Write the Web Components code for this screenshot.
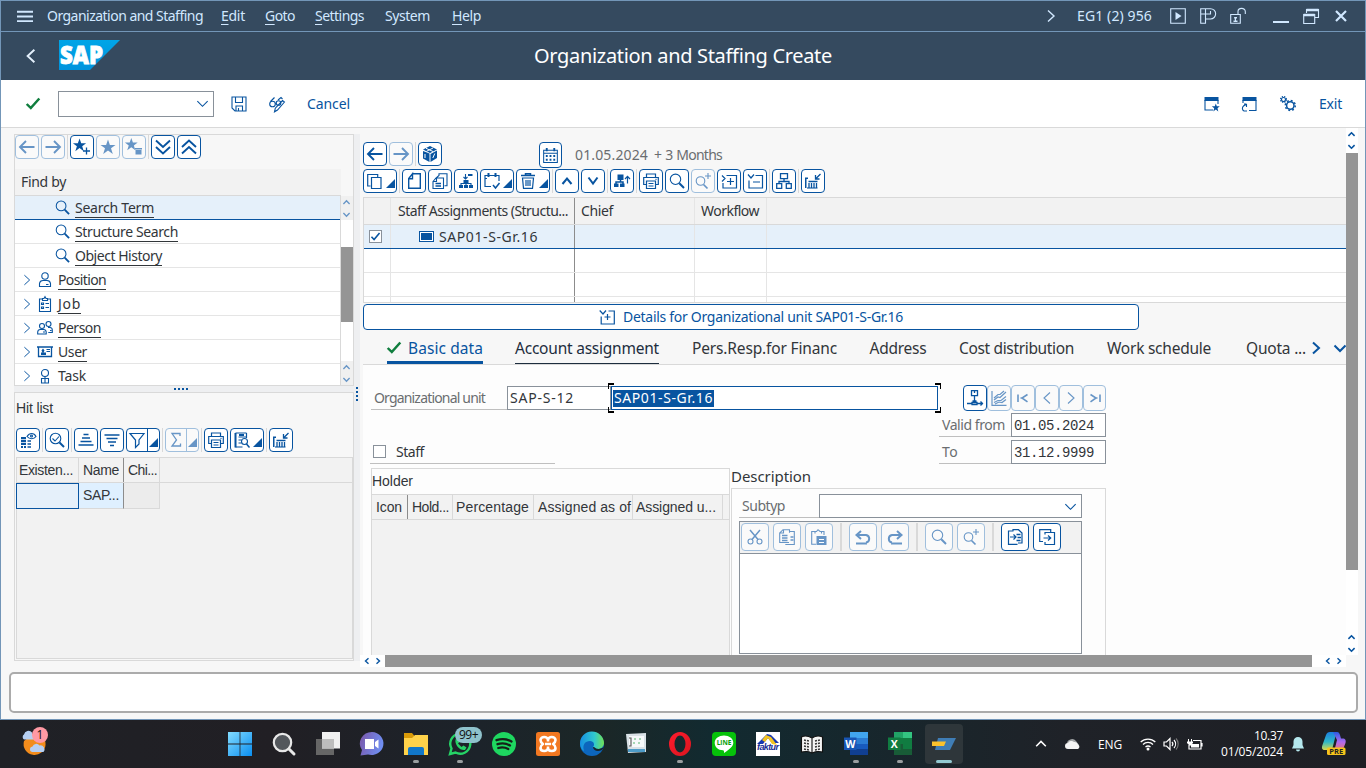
<!DOCTYPE html>
<html lang="en">
<head>
<meta charset="utf-8">
<title>Organization and Staffing Create</title>
<style>
html,body{margin:0;padding:0;width:1366px;height:768px;overflow:hidden}
body{font:14px/20px "Noto Sans","Open Sans",sans-serif;color:#32363a;background:#f7f7f7}
</style>
</head>
<body>
<sap-window></sap-window>
<task-bar></task-bar>
<script>
const STAR='M8 .5l1.9 5.4h5.6L11 9.3l1.8 5.7L8 11.5 3.200 15 5 9.300.5 5.900h5.600z';
const ARROW_IN='<path stroke-width="1.300" d="M15.500 1l-5 5M10.500 2v4h4"/>';
const TREE='<path class="f" d="M5.500 7h5v3h-5zM1 12h4v3H1zM6 12h4v3H6zM11 12h4v3h-4z"/><path d="M3 12v-1.500h10V12M8 9v3"/>';
const ICONS={
 menu:'<path stroke-width="2" d="M0 4h16M0 9h16M0 14h16"/>',
 right:'<path d="M5 2.500l6 5.500-6 5.500"/>',left:'<path d="M11 2.500L5 8l6 5.500"/>',
 down:'<path d="M2.500 5.500L8 11l5.500-5.500"/>',up:'<path d="M2.500 10.500L8 5l5.500 5.500"/>',
 dup:'<path stroke-width="2" d="M3.500 11L8 5.500l4.500 5.500"/>',ddn:'<path stroke-width="2" d="M3.500 4.500L8 10.500l4.500-6"/>',
 play:'<path d="M.7.7h14.600v14.600H.7z"/><path class="f" d="M5.500 4l6 4-6 4z"/>',
 pee:'<path d="M.7.700H10.500a4.800 4.800 0 0 1 0 10.300H5.500v4.300H.7zM5.500 11V6H.7M5.500.7V6h5V3"/>',
 lock:'<path d="M.7 6.500h9.600v8.800H.7zM8 6.500V3.500a3.500 3 0 0 1 7.300 0V6"/><path class="f" d="M4 9h3v1.500H6v2h1.500V14h-4v-1.500H5z"/>',
 min:'<path stroke-width="2" d="M0 14h16"/>',
 restore:'<path d="M3.500 5V1.500h12v8H12M.7 6.500h11v9H.7z"/><path stroke-width="2.500" d="M3.500 2h12M.7 7h11"/>',
 close:'<path stroke-width="2.200" d="M3 3l10 10M13 3L3 13"/>',
 check:'<path stroke-width="2.800" d="M.8 8.500l4.700 5L15.200 1.800"/>',
 save:'<path d="M1 1h14v14H4l-3-3zM4.500 1v5.500h7V1M5 15v-5h6.500v5M7.500 12v3"/>',
 glasses:'<circle cx="3.500" cy="8" r="2.800"/><circle cx="9.500" cy="7" r="2.300"/><path d="M1.500 5.500L5.500 1.500M9 4l3-2.500 1.500 1.500M6.200 7.500h1M15.500 6L8.500 14l-3 1.800.8-3.600L13.500 4.500z"/>',
 winstar:'<path class="f" d="M.5 1h14v4H.5z"/><path d="M1 4v10h8M14 4v4"/><path class="f" d="M11.800 7.500l1 2.800h3l-2.300 1.900.8 3.300-2.500-1.900-2.500 1.900.9-3.300L7.800 10.300h3z"/>',
 winlink:'<path class="f" d="M1.500 1h14v4h-14z"/><path d="M2 4v3M15 4v10.500H8M5.500 8H3M5.500 8v3M5.500 8L2.500 10a3 3 0 0 0 .5 5h3"/>',
 gears:'<circle cx="3.500" cy="3.500" r="2"/><circle cx="3.500" cy="3.500" r="3" stroke-dasharray="1.300 1.100"/><circle cx="10.300" cy="9.500" r="3.700" stroke-width="1.500"/><circle cx="10.300" cy="9.500" r="5" stroke-width="1.500" stroke-dasharray="1.900 2"/>',
 back:'<path stroke-width="1.900" d="M15.500 8H1M7 2L1 8l6 6"/>',fwd:'<path stroke-width="1.900" d="M.5 8H15M9 2l6 6-6 6"/>',
 star:'<path class="f" d="'+STAR+'"/>',
 starplus:'<path class="f" transform="translate(-1.500 -1) scale(.88)" d="'+STAR+'"/><path stroke-width="1.300" d="M12.500 8.500v7M9 12h7"/>',
 stardel:'<path class="f" transform="translate(-1.500 -1.500) scale(.85)" d="'+STAR+'"/><path class="f" d="M9 9h7v1.500H9zM9.500 11h6v4.500h-6z"/>',
 ddown:'<path stroke-width="1.900" d="M1 1.500L8 8l7-6.500M1 8l7 6.500L15 8"/>',dup2:'<path stroke-width="1.900" d="M1 8l7-6.500L15 8M1 14.500L8 8l7 6.500"/>',
 search:'<circle cx="6.500" cy="6.300" r="5.200"/><path stroke-width="2" d="M10.300 10.300l4.700 4.700"/>',
 searchchk:'<circle cx="6.500" cy="6.500" r="5.300"/><path d="M3.500 6.500l2.500 2.500 4-4.500"/><path stroke-width="2" d="M10.500 10.500l4.500 4.500"/>',
 searchplus:'<circle cx="5.500" cy="8" r="4.300"/><path stroke-width="1.700" d="M8.500 11.500l4 4"/><path d="M13 0v6M10 3h6"/>',
 person:'<circle cx="8" cy="4" r="3.200"/><path d="M2.500 14.500v-3A3.500 3.500 0 0 1 6 8.500h4a3.500 3.500 0 0 1 3.500 3v3zM9 12.500h2.500"/>',
 job:'<path d="M5 3H2.500v12.500h11V3H11M5.500 4.500V2.500h1.500L8 .7l1 1.800h1.500v2zM4.500 7h2v1.500h-2zM4.500 11h2v1.500h-2zM8.500 7.500H12M8.500 11.500H12"/>',
 people:'<circle cx="5" cy="6" r="2.500"/><path d="M.7 14v-2A2.700 2.700 0 0 1 3.500 9.500h3A2.700 2.700 0 0 1 9.200 12v2zM6 12h2"/><circle cx="11.500" cy="4" r="2.500"/><path d="M11 7.500h2a2.500 2.500 0 0 1 2.300 2.500v2.500h-4M13 10.500h1.500"/>',
 user:'<path stroke-width="1.300" d="M0 3h16M1.500 3v9.500h13V3"/><path class="f" d="M4 11V8.500h1.500l-1-2L6 4.500l1.500 2-1 2H9V11z"/><path d="M9.500 5.500h3.500M9.500 7.500h3.500"/>',
 task:'<circle cx="8" cy="5" r="3.500"/><path d="M8 8.500V15M4.500 10.500h7V15h-7z"/>',
 rows:'<path d="M7 4.500c2.500-4 7-4 9 0-2 3-6.500 3-9 0z"/><circle cx="11.500" cy="4" r="1"/><path class="f" d="M1 5h5v2.200H1zM1 8h5v2.200H1zM1 11h5v2H1zM1 14h2v2H1zM4 14h2v2H4z"/><path stroke-width="1.600" d="M7.500 9h3.500M7.500 12h3.500M7.500 15h3.500"/>',
 asc:'<path stroke-width="1.300" d="M5.500 2.500h5M4 6h8M2.500 9.500h11M.5 13h15"/>',desc:'<path stroke-width="1.300" d="M.5 3h15M2.500 6.500h11M4 10h8M6 13.500h4"/>',
 filter:'<path stroke-width="1.200" d="M1 1.500h14L10 8v4l-3.500 3.500V8z"/>',
 sum:'<path stroke-width="1.300" d="M12 4V1.500H4L8.500 8 4 14h8.500v-2.500"/>',
 print:'<path stroke-width="1.200" d="M3.500 4.500V1h9v3.500M3.500 11.500H.7v-7h14.600v7h-2.800M3.500 8h9v7.500h-9zM5.500 10.500h5M5.500 13h5M12.500 6.300h1"/>',
 listsearch:'<path stroke-width="1.200" d="M1.500 1h11M12.500 1v5M1.500 15h7M4.500 5h8M4.500 8h3M4.500 11h3"/><path stroke-width="2" d="M1.500 1v14.500M5 3h5"/><circle cx="10.500" cy="9.500" r="3"/><path stroke-width="1.500" d="M12.500 12l3 3.500"/>',
 layout:ARROW_IN+'<path d="M2 15h10.500"/><path class="f" d="M0 4.500h3V6H1.500v9H0z"/><path stroke-width="1.500" d="M3.500 8.500h9"/><path stroke-width="1.300" d="M4 10v5M6.500 10v5M9 10v5M11.500 10v5"/>',
 cube:'<path class="f" d="M1 5l6.500 2.500V16L1 12.500z"/><path class="f" d="M8.500 8L15 4.500V12l-6.500 4z"/><path class="f" d="M1 3.500L8 0l7 3.500L8 7z"/><path stroke="#fff" stroke-width="1" d="M4 2.300l7 3.200M11 2L4.500 5.300M12.800 7.500l-2 4.500M3 8v4"/>',
 cal:'<path d="M.7 2.500h14.600v13H.7zM.7 5.500h14.600"/><path stroke-width="2" d="M4 0v3.500M12 0v3.500"/><path stroke-width="2" stroke-dasharray="2 2" d="M3 8.500h10.500M3 12.500h10.500"/>',
 copy2:'<path stroke-width="1.200" d="M3.500 13H.7V1.500h10V4M4.500 4.500h9.500v11H4.500z"/>',
 page:'<path stroke-width="1.400" d="M6.500.7h7.800v14.600H2.700V5.500L6.500.7v5H2.700"/>',
 pages:'<path d="M3.500 6V5.500L7 2.500V.7h8v12h-2.500M1 8.500l3-3.500h7.500v10.500H1zM4.500 5v3.500H1"/><path stroke-width="1.500" d="M3.500 10.500h5.500M3.500 13h5.500"/>',
 assign:TREE+'<path d="M7.500 1v5M5.500 4l2 2 2-2"/><path stroke-width="2" d="M10 2h4.500"/>',
 calchk:'<path stroke-width="1.200" d="M7 13.500H1v-11h14V8M1 5.500h2"/><path stroke-width="2" d="M4.500 0v4M11.500 0v4"/><path stroke-width="1.500" d="M9 12l2.500 3L15.500 10"/>',
 trash:'<path stroke-width="1.500" d="M1 2.500h14M5.500 2.500V.7h5v1.800"/><path stroke-width="1.200" d="M2.500 5h11l-1 10.300h-9zM6 7v6M8 7v6M10 7v6"/>',
 moveup:'<path class="f" d="M3.500 1.500h6V7h-6zM0 10.500h4.500v3.500H0zM6 10.500h4.500v3.500H6z"/><path stroke-width="1.500" d="M6.500 6v3M2 11V9h7v2"/><path stroke-width="1.200" d="M13.500 10.500V3.500M11 6l2.500-2.700L16 6"/>',
 expand:'<path stroke-width="1.200" d="M1 2.500L4 5.500 1 8.500M5.500 2.500h10v12.500H2V10M9.500 5v7M6 8.500h7"/>',
 collapse:'<path stroke-width="1.200" d="M1 1.500L4 5l3-3.500M8.500 2.500h7v12.500H2V7.500M6 9h7"/>',
 detail:'<path stroke-width="1.200" d="M.7 1.500L4 5l3-3.500M9.500 2h5.800v13H2.200V7.500M8.500 5v6M5.500 8h6"/>',
 org:'<path stroke-width="1.300" d="M4.500.7h7v5h-7zM.7 10.700h5v4.600h-5zM10.300 10.700h5v4.600h-5zM8 6v2.500M3 10.500v-2h10v2"/>',
 tool:'<path stroke-width="1.300" d="M4.500.7h6v5h-6zM7.500.7V3M7.500 5.700V11M5.500 11h4M0 13.500h5M10 13.500h6M13.500 11.500l2 2-2 2M5 12.500h5v2H5z"/>',
 chart:'<path stroke-width="1.200" d="M1 1v14.300h14.500M3 10l4-3 2 .5L15 2M3 12.500l4-2h3l5-4M3 8l4-3.500h2L13 1M4 14l4-2 3 .5 4-3"/>',
 first:'<path stroke-width="1.600" d="M3 4.500v7.500M12.500 4.500L7 8l5.500 3.800M5.500 8h2"/>',last:'<path stroke-width="1.600" d="M13 4.500v7.500M3.500 4.500L9 8l-5.500 3.800M8.500 8h2"/>',
 cut:'<circle cx="3.500" cy="12.500" r="2.500"/><circle cx="12.500" cy="12.500" r="2.500"/><path stroke-width="1.500" d="M3 1l8 9.500M13 1L5 10.500"/>',
 docs:'<path d="M10 13.500H.7V4L4 .7h6.500v3M4.500.7V4H.7M10.500 2.500h4.800v13h-9"/><path stroke-width="1.400" d="M3 6.500h5.500M3 9h5.500M3 11.500h5.500M11.500 8h3M11.500 11h3"/>',
 paste:'<path d="M4 2.500H.7v12.800H5M11 2.500h2V6M4 4.500V2.500h1.500L7 .7l2 1.800h1.500v2"/><path class="f" d="M5.500 7h10v9h-10z"/><path stroke="#fff" d="M8 10.500h5M8 13.500h5"/>',
 undo:'<path stroke-width="2" d="M6 2L1.500 6 6 10M2 6h9a3.800 3.800 0 0 1 0 7.500M1 14.500h11"/>',
 redo:'<path stroke-width="2" d="M10 2l4.500 4-4.500 4M14 6H5a3.800 3.800 0 0 0 0 7.500M4 14.500h11"/>',
 load:'<path stroke-width="1.200" d="M6.500 2H1.500v13.300h9M6 2V.7h5.500L15 4v10H11M3 8h6M6.500 5.500L9 8l-2.500 2.500"/><path stroke-width="1.600" d="M9.500 5.500h4M10.500 8.500h3.500M9.500 11.500h4"/>',
 saveas:'<path stroke-width="1.200" d="M4 12.500H.7V.7h11V3M6 5.500V3.500h9.500v12H6v-2.500M4.500 9h7M9 6.500L11.700 9 9 11.500"/>',
 win:'<defs><linearGradient id="w" x2="1" y2="1"><stop stop-color="#83dcff"/><stop offset="1" stop-color="#0a8ef0"/></linearGradient></defs><path stroke="none" fill="url(#w)" d="M0 0h11.600v11.600H0zM12.400 0H24v11.600H12.400zM0 12.400h11.600V24H0zM12.400 12.400H24V24H12.400z"/>',
 wsearch:'<circle cx="10.500" cy="10.500" r="8.700" fill="#53575c" stroke="#e8e8e8" stroke-width="2.200"/><path stroke="#e8e8e8" stroke-width="3" stroke-linecap="round" d="M17 17l5 5"/>',
 wtask:'<path stroke="none" fill="#666" d="M0 7h18v16H0z"/><path stroke="none" fill="#f0f0f0" d="M6 0h18v16.500H6z"/><path stroke="none" fill="#bdbdbd" d="M6 7h12v9.500H6z"/>',
 wchat:'<defs><linearGradient id="c" x2="1" y2=".3"><stop stop-color="#7b56a8"/><stop offset="1" stop-color="#6f8df0"/></linearGradient></defs><path stroke="none" fill="url(#c)" d="M12 0a12 11.500 0 1 1-4 22.500L.5 23.500 2 18A12 11.500 0 0 1 12 0z"/><path stroke="none" fill="#fff" d="M5 7h9v10H5zM15 10l3.500-2.500v9L15 14z"/>',
 wfolder:'<path stroke="none" fill="#d99a08" d="M0 1h8l2.500 3H24v8H0z"/><path stroke="none" fill="#ffd24a" d="M0 6h8l3-3h13v20H0z"/><path stroke="none" fill="#1177c9" d="M4 23v-6a2 2 0 0 1 2-2h12a2 2 0 0 1 2 2v6z"/>',
 wwa:'<path stroke="#25d366" stroke-width="2.400" d="M2 22l1.500-5.500a10 10 0 1 1 4 4z"/><path stroke="none" fill="#25d366" d="M7.500 7.500l2-1.500 2 4-1.500 1.500 3.500 3.500 2-1.500 3 2-1.500 2.500c-5 1-10.500-5-9.500-10.500z"/>',
 wspot:'<circle cx="12" cy="12" r="12" fill="#1ed760" stroke="none"/><path stroke="#152018" stroke-width="2.300" stroke-linecap="round" d="M4.500 8.200c5-1.600 11-1 15 1.300M5.500 12.200c4-1.200 9-.8 12.500 1.300M6.300 16c3.500-1 7-.6 10 1"/>',
 wxampp:'<rect width="24" height="24" rx="2.500" fill="#f27821" stroke="none"/><path stroke="#fff" stroke-width="2.600" stroke-linejoin="round" d="M12 9.500V8c0-4-7.500-4-7.500 0 0 2 1 3 2.500 4-1.500 1-2.500 2-2.500 4 0 4 7.500 4 7.500 0M12 14.500V16c0 4 7.500 4 7.500 0 0-2-1-3-2.500-4 1.500-1 2.500-2 2.500-4 0-4-7.500-4-7.500 0M9 12h6"/>',
 wedge:'<defs><linearGradient id="e" x1="0" x2="1"><stop stop-color="#168ee0"/><stop offset=".6" stop-color="#30c8cf"/><stop offset="1" stop-color="#71e153"/></linearGradient></defs><circle cx="12" cy="12" r="12" fill="#0c66bd" stroke="none"/><path stroke="none" fill="url(#e)" d="M0 12a12 12 0 0 1 24-1c0 6-8 8-11 4 2-2 1-6-3-6-5 0-8 4-6 10C2 18 0 15 0 12z"/><path stroke="none" fill="#16262d" d="M14 15c3 3 7 2 10 0-1 3-4 4-6 4-3 0-5-2-5-4z"/>',
 wapp:'<path stroke="none" fill="#d9e1e6" d="M2 2l20-1v19L4 21z"/><path stroke="none" fill="#f6f9fa" d="M5 4h15v11H5z"/><path stroke="none" fill="#4d9cc8" d="M4 17h17v3H4z"/><path stroke="#555" d="M5 6h2v8H5"/><path stroke="#54b66d" stroke-dasharray="2 3" d="M10 7h8M9 11h8"/>',
 wopera:'<defs><linearGradient id="o" x2="1" y2="1"><stop stop-color="#ff1b2d"/><stop offset="1" stop-color="#d9161f"/></linearGradient></defs><path stroke="none" fill="url(#o)" fill-rule="evenodd" d="M12 0a11 12 0 0 1 0 24 11 12 0 0 1 0-24zm0 3.500a5.500 8.500 0 0 0 0 17 5.500 8.500 0 0 0 0-17z"/>',
 wline:'<rect width="24" height="24" rx="4" fill="#06c20a" stroke="none"/><path stroke="none" fill="#fff" d="M12 3.500c5 0 9.300 3 9.300 7.200 0 4-5 7.500-9.300 10.300 0-2 0-2.500-1-2.700C6 18 2.700 15 2.700 10.700 2.700 6.500 7 3.500 12 3.500z"/><text x="12" y="13.200" text-anchor="middle" font-size="6.500" font-weight="700" font-family="Open Sans,sans-serif" fill="#06a00a" stroke="none">LINE</text>',
 wfak:'<path stroke="none" fill="#fff" d="M0 0h24v24H0z"/><path stroke="none" fill="#1838b0" d="M1 12L11 2l4 1 8 8h-7l-4-5-5 6z"/><path stroke="none" fill="#f4c520" d="M6 8l4-5 5 2 6 8-5-1-4-6-3 4z"/><text x="12" y="18" text-anchor="middle" font-size="9" font-style="italic" font-weight="700" font-family="Liberation Sans,sans-serif" fill="#172c93" stroke="none" textLength="22">faktur</text>',
 wbook:'<path stroke="#111" fill="#f4f4f4" d="M1.500 5c4-2 7-1 10.500 1 3-2 6-3 10.500-1v15c-4-1-7-1-10.500 1-3-2-6-2-10.500-1zM12 6v15"/><path stroke="#333" stroke-width="1.500" stroke-dasharray="2 1" d="M4 8l5 1M4 11l5 1M4 14l5 1M4 17l5 1M15 9l5-1M15 12l5-1M15 15l5-1M15 18l5-1"/>',
 wword:'<path stroke="none" fill="#41a5ee" d="M6 0h18v6H6z"/><path stroke="none" fill="#2b7cd3" d="M6 6h18v6H6z"/><path stroke="none" fill="#185abd" d="M6 12h18v5H6z"/><path stroke="none" fill="#103f91" d="M6 17h18v6H6z"/><path stroke="none" fill="#1855b4" d="M0 5.500h12.500v12.500H0z"/><text x="6.300" y="15.500" text-anchor="middle" font-size="10.500" font-weight="700" font-family="Open Sans,sans-serif" fill="#fff" stroke="none">W</text>',
 wexcel:'<path stroke="none" fill="#21a366" d="M6 0h9v6H6z"/><path stroke="none" fill="#33c481" d="M15 0h9v6h-9z"/><path stroke="none" fill="#107c41" d="M6 6h18v6H6z"/><path stroke="none" fill="#185c37" d="M6 12h18v11H6z"/><path stroke="none" fill="#107c41" d="M15 12h9v5h-9zM0 5.500h12.500v12.500H0z"/><text x="6.300" y="15.500" text-anchor="middle" font-size="10.500" font-weight="700" font-family="Open Sans,sans-serif" fill="#fff" stroke="none">X</text>',
 wsap:'<path stroke="none" fill="#3f7db5" d="M6 6h18l-6 12H3z"/><path stroke="none" fill="#fbc22c" d="M0 9.500h14l-2 4.500H0z"/>',
 weather:'<path stroke="none" fill="#f28c1c" d="M13 3a11 11 0 1 1-10 8z"/><path stroke="none" fill="#b6cff2" d="M3 9.500a3 3 0 0 1 0-5 4.500 4.500 0 0 1 8-2l2 7zM11 22a2.800 2.800 0 0 1 .5-5.500 4 4 0 0 1 7-1 4 4 0 0 1 4 6.500z"/>',
 cloud:'<path stroke="none" fill="#a0a3a5" d="M2 8a5 4.500 0 0 1 9-3l3 4-4 4z"/><path stroke="none" fill="#f4f4f4" d="M3 13a3 3 0 0 1 0-6 4 4 0 0 1 6-1 3.500 3.500 0 0 1 4 2.500A2.500 2.500 0 0 1 13 13z"/>',
 wifi:'<path stroke-width="1.300" d="M.7 6a10.500 10.500 0 0 1 14.600 0M3 8.500a7 7 0 0 1 10 0M5.500 11a4 4 0 0 1 5 0"/><circle class="f" cx="8" cy="13" r="1.500"/>',
 sound:'<path stroke-width="1.200" d="M1 6h2.500L7 2.500v11L3.500 10H1zM9 6a3 3 0 0 1 0 4M11 4a6 6 0 0 1 0 8"/><path stroke="#777" d="M13 2.500a8 8 0 0 1 0 11"/>',
 batt:'<path stroke-width="1.200" d="M6 4.500h8v8.500H2V9M15 7v3.500"/><path class="f" d="M4 8h8v3.500H4zM0 5.500h1V3h1v2.500h2V3h1v2.500h1V7L4 9 3 10 0 7z"/>',
 bell:'<path class="f" stroke="none" d="M8 1a4.500 4.500 0 0 1 4.500 4.500V9l1.500 3.500H2L3.500 9V5.500A4.500 4.500 0 0 1 8 1zM6 13.500h4a2 2 0 0 1-4 0z"/>',
 copilot:'<defs><linearGradient id="p" x2="0" y2="1"><stop stop-color="#1b7fe0"/><stop offset=".55" stop-color="#2fb6c6"/><stop offset="1" stop-color="#d9d84a"/></linearGradient><linearGradient id="q" x2="0" y2="1"><stop stop-color="#2a5be0"/><stop offset=".5" stop-color="#b06af0"/><stop offset="1" stop-color="#f5775a"/></linearGradient></defs><path stroke="none" fill="url(#p)" d="M8 0h6.500L10 18H3c-3 0-3.500-2-2.700-4.500L4 3c.7-2 2-3 4-3z"/><path stroke="none" fill="url(#q)" d="M11 0h4c2 0 2.500 1.500 3 3l1 3.500h1.500c3 0 3.700 2 3 4.500L20 20h-8l3-12z"/><rect x="5" y="15.500" width="18.500" height="7.500" rx="1.500" fill="#f8c51b" stroke="none"/><text x="14.300" y="22" text-anchor="middle" font-size="7.500" font-weight="700" font-family="Open Sans,sans-serif" fill="#222" stroke="none">PRE</text>'
};
const def=(name,css,tpl)=>customElements.define(name,class extends HTMLElement{
 connectedCallback(){
  if(this.shadowRoot)return;
  const t=document.createElement('template');
  t.innerHTML=`<style>*,:host{box-sizing:border-box}${css}</style>`+(typeof tpl==='function'?tpl(this):tpl);
  this.attachShadow({mode:'open'}).append(t.content.cloneNode(true));
 }});
const at=(e,n,d='')=>e.getAttribute(n)??d;
const ml=(n,more='')=>`style="margin-left:${n}px;${more}"`;
const btn=(icon,x='')=>`<tool-btn icon="${icon}" ${x}></tool-btn>`;
const sep='<tool-sep></tool-sep>';

def('ui-icon',`:host{display:block;flex:none}svg{display:block;fill:none;stroke:currentColor;stroke-width:var(--sw,1.100);overflow:visible}.f{fill:currentColor;stroke:none}`,
 e=>{const v=at(e,'box','16'),s=at(e,'s','16');return `<svg width="${s}" height="${at(e,'h',s)}" viewBox="0 0 ${v} ${v}" preserveAspectRatio="none">${ICONS[at(e,'n')]}</svg>`});

def('tool-btn',`:host{display:flex;flex:none;align-items:center;justify-content:center;width:24px;height:24px;border:1px solid #0854a0;border-radius:4px;background:#fff;color:#0854a0}
 :host([dis]){border-color:#a0bfdd;background:#fafafa;color:#6795c6}:host([menu]){width:34px;justify-content:flex-start;padding-left:3px}:host([split]){padding-left:2px}
 .m{margin-left:auto;align-self:flex-end;margin-bottom:4px;margin-right:1px;width:9px;height:9px;background:currentColor;clip-path:polygon(100% 0,100% 100%,0 100%)}
 i{width:1px;align-self:stretch;background:#0854a0;margin-left:2px}:host([dis]) i{background:#a0bfdd}`,
 e=>`<ui-icon n="${at(e,'icon')}" s="${at(e,'s','16')}"></ui-icon>`+(e.hasAttribute('split')?'<i></i>':'')+(e.hasAttribute('menu')?'<span class="m"></span>':''));
def('tool-sep',`:host{display:block;flex:none;width:1px;align-self:stretch;background:#d9d9d9}`,'');
def('tool-row',`:host{display:flex;gap:2px;height:24px}`,'<slot></slot>');

def('title-bar',`:host{display:flex;align-items:center;height:31px;border-bottom:1px solid #7396b8;background:#354a5f;color:#d1e8ff;padding-left:16px}
 u{text-underline-offset:3px}.r{display:flex;align-items:center;margin-left:auto;padding-right:16px}`,
 `<ui-icon n="menu" s="16" h="15" style="margin-top:-2px"></ui-icon><fit-text w="156" ${ml(14)}>Organization and Staffing</fit-text><fit-text w="24" ${ml(18)}><u>E</u>dit</fit-text><fit-text w="30" ${ml(20)}><u>G</u>oto</fit-text><fit-text w="49" ${ml(20)}><u>S</u>ettings</fit-text><fit-text w="45" ${ml(21)}>System</fit-text><fit-text w="29" ${ml(22)}><u>H</u>elp</fit-text>
 <div class="r"><ui-icon n="right" s="16" style="--sw:1.4"></ui-icon><fit-text w="75" ${ml(18)}>EG1 (2) 956</fit-text><ui-icon n="play" ${ml(18)}></ui-icon><ui-icon n="pee" ${ml(14)}></ui-icon><ui-icon n="lock" ${ml(14)}></ui-icon><ui-icon n="min" ${ml(27)}></ui-icon><ui-icon n="restore" ${ml(14)}></ui-icon><ui-icon n="close" ${ml(14)}></ui-icon></div>`);
def('shell-header',`:host{display:grid;grid-template-columns:533px 1fr;align-items:center;height:48px;background:#354a5f;color:#fff;font-size:20px;line-height:28px}.l{display:flex;align-items:center;padding-left:21px}svg{margin:-2px 0 0 19px;overflow:visible}`,
 `<div class="l"><ui-icon n="left" s="18" style="color:#e4f0fc;--sw:1.7"></ui-icon><svg width="62" height="30"><defs><linearGradient id="g" x2="0" y2="1"><stop stop-color="#00a5e7"/><stop offset="1" stop-color="#0093dd"/></linearGradient></defs><path fill="url(#g)" d="M0 0h61L31 30H0z"/><text x="1" y="23.800" font-family="Open Sans,sans-serif" font-weight="800" font-size="25.500" textLength="43" lengthAdjust="spacingAndGlyphs" fill="#fff" stroke="#fff" stroke-width=".9">SAP</text></svg></div><fit-text w="298">Organization and Staffing Create</fit-text>`);
def('command-bar',`:host{display:flex;align-items:center;height:48px;background:#fff;border-bottom:1px solid #d9d9d9;padding-left:25px;color:#0854a0}
 .c{display:flex;align-items:center;justify-content:flex-end;width:156px;height:26px;border:1px solid #89919a;padding-right:4px;margin-left:18px}.r{margin-left:auto;display:flex;align-items:center;padding-right:23px}`,
 `<ui-icon n="check" s="14" h="13" style="color:#107e3e;margin-top:-1px"></ui-icon><div class="c"><ui-icon n="down" s="15" style="--sw:1.2;margin-right:-1px"></ui-icon></div><ui-icon n="save" s="16" ${ml(17)}></ui-icon><ui-icon n="glasses" ${ml(22)}></ui-icon><fit-text w="43" ${ml(22)}>Cancel</fit-text>
 <div class="r"><ui-icon n="winstar"></ui-icon><ui-icon n="winlink" ${ml(21)}></ui-icon><ui-icon n="gears" ${ml(23)}></ui-icon><fit-text w="23" ${ml(23)}>Exit</fit-text></div>`);

def('tree-row',`:host{display:flex;align-items:center;height:24px;flex:none;border-bottom:1px solid #e5e5e5;background:#fff;padding-left:5px}
 :host([child]){padding-left:40px}:host([sel]){background:#e5f0fa;border-bottom-color:#0854a0}ui-icon{color:#0854a0}.t{border-bottom:1px solid #32363a;height:20px;line-height:19px;margin-top:1px}:host([last]) .t{border:0}`,
 e=>(e.hasAttribute('child')?'<ui-icon n="search" s="15" style="margin-right:-1px"></ui-icon>':'<ui-icon n="right" s="14" style="margin-right:-1px"></ui-icon>'+`<ui-icon n="${at(e,'icon')}" s="16" ${ml(4)}></ui-icon>`)+`<div class="t" ${ml(e.hasAttribute('child')?6:5)}><fit-text w="${at(e,'w')}">${e.textContent}</fit-text></div>`);
def('arrow-pair',`:host{display:flex;flex-direction:column;align-items:center;justify-content:space-around;width:12px;height:24px;padding-right:1px;background:#fff;color:#0854a0;--sw:2.8}:host([dim]){background:#f0f0f0;color:#6795c6;--sw:2.4}:host([h]){flex-direction:row;justify-content:center;gap:3px;width:25px;height:12px}`,
 e=>e.hasAttribute('h')?'<ui-icon n="left" s="8"></ui-icon><ui-icon n="right" s="8"></ui-icon>':'<ui-icon n="up" s="9"></ui-icon><ui-icon n="down" s="9"></ui-icon>');
def('split-dots',`:host{display:flex;gap:2px;align-items:center;justify-content:center}:host([v]){flex-direction:column}i{width:2px;height:2px;background:#0854a0}`,'<i></i><i></i><i></i><i></i>');

def('find-panel',`:host{display:flex;flex-direction:column;height:252px;border:1px solid #d9d9d9;background:#f7f7f7}tool-row{flex:none}
 .h{flex:none;width:326px;height:27px;margin-top:10px;background:#f2f2f2;border-bottom:1px solid #d9d9d9;padding:3px 0 0 6px}
 .b{display:flex;height:189px}.l{width:326px;border-right:1px solid #d9d9d9;overflow:hidden}.s{display:flex;flex-direction:column;width:12px;background:#fff}.k{height:75px;margin:27px 0 39px;background:#959595}`,
 `<tool-row>${btn('back','dis')}${btn('fwd','dis')}${sep}${btn('starplus')}${btn('star','dis')}${btn('stardel','dis')}${sep}${btn('ddown')}${btn('dup2')}</tool-row><div class="h"><fit-text w="45">Find by</fit-text></div>
 <div class="b"><div class="l"><tree-row child sel w="79">Search Term</tree-row><tree-row child w="103">Structure Search</tree-row><tree-row child w="87">Object History</tree-row><tree-row icon="person" w="48">Position</tree-row><tree-row icon="job" w="23">Job</tree-row><tree-row icon="people" w="43">Person</tree-row><tree-row icon="user" w="29">User</tree-row><tree-row last icon="task" w="28">Task</tree-row></div>
 <div class="s"><arrow-pair dim></arrow-pair><div class="k"></div><arrow-pair dim></arrow-pair></div></div>`);
def('hit-panel',`:host{display:block;height:269px;border:1px solid #d9d9d9;background:#f7f7f7;font-family:"Liberation Sans",Arial,sans-serif;padding-left:1px}
 .t{height:35px;padding-top:5px}.g{height:202px;margin-top:5px;border:1px solid #d9d9d9;background:#f2f2f2}.r{display:grid;grid-template-columns:62px 45px 36px}.hd{height:25px;border-bottom:1px solid #d9d9d9}.hd>*{height:24px;border-right:1px solid #d9d9d9;padding:2px 0 0 2px}.hd>:nth-child(2){border-color:#8c8c8c;padding-left:4px}.hd>:nth-child(3){padding-left:4px}
 .d>*{height:26px;border:0 solid #d9d9d9;border-width:0 1px 1px 0}.d>:nth-child(1){border:1px solid #0854a0;background:#e5f0fa;margin-left:-1px;width:63px}.d>:nth-child(2){background:#dff0ff;border-right-color:#8c8c8c;padding:2px 0 0 4px}.d>:nth-child(3){background:#ececec}`,
 `<div class="t"><fit-text w="37">Hit list</fit-text></div><tool-row>${btn('rows')}${sep}${btn('searchchk')}${sep}${btn('asc')}${btn('desc')}${btn('filter','menu split')}${sep}${btn('sum','dis menu split')}${sep}${btn('print')}${btn('listsearch','menu')}${sep}${btn('layout')}</tool-row>
 <div class="g"><div class="r hd"><div><fit-text w="54">Existen...</fit-text></div><div><fit-text w="36">Name</fit-text></div><div><fit-text w="29">Chi...</fit-text></div></div><div class="r d"><div></div><div><fit-text w="36">SAP...</fit-text></div><div></div></div></div>`);

def('staff-grid',`:host{display:block;height:106px;margin-top:4px;border:1px solid #d9d9d9;border-right:0;background:#fff;overflow:hidden}
 .r{display:grid;grid-template-columns:27px 184px 120px 72px 1fr;height:24px;border-bottom:1px solid #e5e5e5}.r>*{border-right:1px solid #e5e5e5;display:flex;align-items:center}.r>:nth-child(2){border-color:#8c8c8c}.r>:last-child{border:0}
 .h{height:27px;background:#f2f2f2;border-color:#d9d9d9}.s{background:#e5f0fa;border-color:#0854a0}.k{width:13px;height:13px;border:1px solid #89919a;background:#fff;margin-left:5px;color:#0854a0}.o{width:15px;height:11px;border:1px solid #0854a0;background:#0854a0;box-shadow:inset 0 0 0 1px #fff;margin-left:28px}`,
 `<div class="r h"><div></div><div><fit-text w="170" ${ml(7)}>Staff Assignments (Structu...</fit-text></div><div><fit-text w="32" ${ml(6)}>Chief</fit-text></div><div><fit-text w="58" ${ml(6)}>Workflow</fit-text></div><div></div></div>
 <div class="r s"><div><div class="k"><ui-icon n="check" s="9" style="margin:1px"></ui-icon></div></div><div><div class="o"></div><fit-text w="99" ${ml(5)}>SAP01-S-Gr.16</fit-text></div><div></div><div></div><div></div></div>
 <div class="r"><div></div><div></div><div></div><div></div><div></div></div><div class="r"><div></div><div></div><div></div><div></div><div></div></div><div class="r"><div></div><div></div><div></div><div></div><div></div></div>`);
def('tab-item',`:host{display:flex;align-items:center;height:34px;font-size:15.500px;border-bottom:3px solid transparent;padding-top:5px}:host([on]){color:#0854a0;border-color:#0854a0}:host([hover]){color:#1d2d3e;border-bottom:1px solid #1d2d3e;padding-bottom:2px}ui-icon{color:#107e3e;margin:-2px 7px 0 0}`,
 e=>(e.hasAttribute('on')?'<ui-icon n="check" s="14" h="13"></ui-icon>':'')+`<fit-text w="${at(e,'w')}">${e.textContent}</fit-text>`);
def('tab-strip',`:host{display:flex;height:35px;border-bottom:1px solid #d9d9d9;padding-left:24px;gap:32.500px;overflow:hidden;width:983px}.c{display:flex;gap:8px;margin:10px 0 0 -31px;color:#0854a0;--sw:2}`,
 `<tab-item on w="75">Basic data</tab-item><tab-item hover w="144" style="margin-left:-.5px">Account assignment</tab-item><tab-item w="145" style="margin-left:.5px">Pers.Resp.for Financ</tab-item><tab-item w="57">Address</tab-item><tab-item w="115">Cost distribution</tab-item><tab-item w="104" style="margin-left:.5px">Work schedule</tab-item><tab-item w="60" style="margin-left:2.500px">Quota ...</tab-item><div class="c"><ui-icon n="right" s="16"></ui-icon><ui-icon n="down" s="16"></ui-icon></div>`);
def('form-field',`:host{display:flex;height:24px}.l{width:var(--l);border-bottom:1px solid #bfbfbf;color:#6a6d70;padding:2px 0 0 3px}.v{flex:1;border:1px solid #89919a;background:#fff;padding:1px 0 0 2px;display:flex;align-items:center;justify-content:space-between}:host([mono]) .v{font-family:"Liberation Mono",monospace}`,
 e=>`<div class="l" style="--l:${at(e,'lw')}px"><fit-text w="${at(e,'tw')}">${at(e,'label')}</fit-text></div><div class="v"><slot></slot></div>`);
def('focus-field',`:host{display:block;position:relative;width:327px;height:24px;border:1px solid #0854a0;background:#fff;padding:3px 0 0 1px}.x{background:#0854a0;color:#fff;display:block;height:17px;line-height:16px;width:101px;padding-left:1px}
 i{position:absolute;width:6px;height:6px;border:0 solid #000}`,
 `<div class="x"><fit-text w="99">SAP01-S-Gr.16</fit-text></div><i style="left:-4px;top:-4px;border-width:2px 0 0 1px"></i><i style="left:-4px;bottom:-4px;border-width:0 0 2px 1px"></i><i style="right:-4px;top:-4px;border-width:2px 1px 0 0"></i><i style="right:-4px;bottom:-4px;border-width:0 1px 2px 0"></i>`);
def('holder-grid',`:host{display:block;width:359px;height:190px;margin-left:8px;border:1px solid #d9d9d9;background:#f2f2f2;font-family:"Liberation Sans",Arial,sans-serif}.t{height:26px;background:#fdfdfd;border-bottom:1px solid #d9d9d9;padding-top:2px}.h{display:grid;grid-template-columns:36px 45px 81px 99px 90px 1fr;height:25px;border-bottom:1px solid #d9d9d9}.h>*{border-right:1px solid #d9d9d9;padding:2px 0 0 4px;white-space:nowrap}.h>:first-child{border-color:#8c8c8c;padding-left:4px}.h>:last-child{border:0}`,
 `<div class="t"><fit-text w="41">Holder</fit-text></div><div class="h"><div><fit-text w="26">Icon</fit-text></div><div><fit-text w="37">Hold...</fit-text></div><div style="padding-left:3px"><fit-text w="73">Percentage</fit-text></div><div><fit-text w="93">Assigned as of</fit-text></div><div style="padding-left:3px"><fit-text w="80">Assigned u...</fit-text></div><div></div></div>`);
const big=(i,m,d)=>`<tool-btn icon="${i}" ${d?'dis':''} style="width:28px;height:28px;margin-left:${m}px"></tool-btn>`;
const bar='<i></i>';
def('text-editor',`:host{display:block;width:343px;height:133px;margin-top:3px;border:1px solid #89919a;background:#fff}.t{display:flex;height:32px;background:#f2f2f2;border-bottom:1px solid #89919a;padding:1px 0 0 1px}i{width:2px;height:28px;background:#d9d9d9;margin-left:7px}`,
 `<div class="t">${big('cut',0,1)}${big('docs',4,1)}${big('paste',4,1)}${bar}${big('undo',7,1)}${big('redo',4,1)}${bar}${big('search',7,1)}${big('searchplus',4,1)}${bar}${big('load',7)}${big('saveas',4)}</div>`);
def('description-box',`:host{display:block;width:375px;margin-left:1px}.t{height:20px;font-size:15px;line-height:17px}.b{height:180px;border:1px solid #d9d9d9;padding:5px 0 0 7px}form-field{width:343px}`,
 `<div class="t"><fit-text w="80">Description</fit-text></div><div class="b"><form-field label="Subtyp" lw="80" tw="43"><span></span><ui-icon n="down" s="15" style="color:#0854a0;margin-right:3px;--sw:1.2"></ui-icon></form-field><text-editor></text-editor></div>`);
def('basic-data',`:host{display:block;height:290px;background:#fdfdfd;padding-top:20px}.a{display:flex;height:28px}.a>form-field{width:240px;margin:1px 0 0 8px}.a>focus-field{margin-top:1px}.n{display:flex;margin-left:25px}tool-btn{height:26px}.b{display:flex;justify-content:space-between;height:55px;width:743px}.s{display:flex;align-items:center;gap:10px;width:185px;height:24px;margin:27px 0 0 7px;border-bottom:1px solid #bfbfbf;padding-left:3px}.k{width:13px;height:13px;border:1px solid #89919a;background:#fff}.d form-field{width:167px;margin-bottom:3px}.c{display:flex}`,
 `<div class="a"><form-field label="Organizational unit" lw="136" tw="111"><fit-text w="64" style="margin-top:-2px">SAP-S-12</fit-text></form-field><focus-field></focus-field><div class="n">${btn('tool')}${btn('chart','dis')}${btn('first','dis')}${btn('left','dis')}${btn('right','dis')}<tool-btn icon="last" dis style="width:23px"></tool-btn></div></div>
 <div class="b"><div class="s"><div class="k"></div><fit-text w="28">Staff</fit-text></div><div class="d"><form-field mono label="Valid from" lw="72" tw="63"><fit-text w="80">01.05.2024</fit-text></form-field><form-field mono label="To" lw="72" tw="16"><fit-text w="80">31.12.9999</fit-text></form-field></div></div>
 <div class="c"><holder-grid></holder-grid><description-box></description-box></div>`);
def('detail-view',`:host{display:block;overflow:hidden;padding-left:3px;height:527px}.a{display:flex;margin-top:14px;height:27px;color:#6a6d70}.d{margin:0 0 0 97px;width:23px;height:26px}.x{display:flex;align-items:center;justify-content:center;gap:8px;width:776px;height:26px;margin-top:1px;border:1px solid #0854a0;border-radius:4px;background:#fff;color:#0854a0}`,
 `<div class="a"><tool-row>${btn('back')}${btn('fwd','dis')}${sep}${btn('cube')}</tool-row><tool-btn class="d" icon="cal" s="15"></tool-btn><fit-text w="73" style="margin:3px 0 0 13px">01.05.2024</fit-text><fit-text w="68" style="margin:3px 0 0 6px;word-spacing:1px">+ 3 Months</fit-text></div>
 <tool-row>${btn('copy2','menu')}${sep}${btn('page')}${btn('pages')}${btn('assign')}${btn('calchk','menu')}${btn('trash','menu')}${sep}${btn('dup')}${btn('ddn')}${sep}${btn('moveup')}${sep}${btn('print')}${btn('search')}${btn('searchplus','dis')}${btn('expand')}${btn('collapse')}${sep}${btn('org')}${sep}${btn('layout')}</tool-row>
 <staff-grid></staff-grid><div class="x"><ui-icon n="detail" s="16"></ui-icon><fit-text w="280">Details for Organizational unit SAP01-S-Gr.16</fit-text></div><tab-strip></tab-strip><basic-data></basic-data>`);
def('work-area',`:host{display:flex;height:540px}.l{display:flex;width:346px;height:527px;margin:6px 0 0 13px;background:#eeeff1}.p{width:340px}.p split-dots{height:6px;padding-right:6px}.v{width:6px;height:14px;margin:253px 0 0;justify-content:flex-start}
 .r{display:grid;grid-template-columns:986px 12px;grid-template-rows:527px 12px}.vs{display:flex;flex-direction:column;background:#fff}.vs b{height:417px;margin:1px 0 61px;background:#959595}.hs{display:flex;background:#fff}.hs b{width:927px;background:#959595}`,
 `<div class="l"><div class="p"><find-panel></find-panel><split-dots></split-dots><hit-panel></hit-panel></div><split-dots class="v" v></split-dots></div>
 <div class="r"><detail-view></detail-view><div class="vs"><arrow-pair></arrow-pair><b></b><arrow-pair></arrow-pair></div><div class="hs"><arrow-pair h></arrow-pair><b></b><span style="width:9px"></span><arrow-pair h></arrow-pair></div></div>`);
def('message-bar',`:host{display:block;height:41px;width:1349px;margin:4px 0 0 8px;border:2px solid #ababab;border-radius:5px;background:#fff}`,'');
def('sap-window',`:host{display:block;width:1366px;height:720px;border:1px solid #7396b8;background:#f7f7f7;overflow:hidden}`,
 `<title-bar></title-bar><shell-header></shell-header><command-bar></command-bar><work-area></work-area><message-bar></message-bar>`);

def('task-app',`:host{display:flex;flex-direction:column;align-items:center;position:relative;width:44px;height:48px;padding-top:12px;flex:none}:host([run])::after{content:"";width:6px;height:3px;border-radius:2px;background:#9a9ea0;margin-top:4px}:host([active]){width:38px;margin:4px 3px 0;height:40px;padding-top:8px;background:#2e363a;border-radius:4px}:host([active])::after{width:16px;background:#93c9d1;margin-top:4px}
 b{position:absolute;left:17px;top:7px;height:16px;padding:0 4px;border-radius:8px;background:#8fc2cc;color:#111;font:12px/16px "Open Sans",sans-serif}`,
 e=>`<ui-icon n="${at(e,'n')}" s="24" box="24"></ui-icon>`+(at(e,'badge')?`<b><fit-text w="19">${at(e,'badge')}</fit-text></b>`:''));
def('task-bar',`:host{display:flex;align-items:flex-start;width:1366px;height:48px;background:linear-gradient(90deg,#1f2126 0,#211f24 20%,#1c232a 35%,#1b2727 44%,#122a30 52%,#16272d 62%,#1f2228 78%,#1e1f24);color:#fff;font:12px/16px "Open Sans",sans-serif}
 .w{position:relative;width:24px;margin:10px 0 0 21px}.w b{position:absolute;left:11px;top:-3px;width:16px;height:16px;border-radius:8px;background:#ff99a4;color:#111;font-weight:400;text-align:center}.a{display:flex;margin-left:173px}.t{display:flex;align-items:center;height:48px;margin-left:auto;padding-right:20px}.c{display:flex;flex-direction:column;align-items:flex-end}`,
 `<div class="w"><ui-icon n="weather" s="24" box="24"></ui-icon><b>1</b></div><div class="a">${['win','wsearch','wtask','wchat','wfolder run','wwa run','wspot','wxampp','wedge','wapp','wopera run','wline','wfak','wbook','wword run','wexcel run','wsap run active'].map(s=>{const[n,...f]=s.split(' ');return `<task-app n="${n}" ${f.join(' ')} ${n==='wwa'?'badge="99+"':''}></task-app>`}).join('')}</div>
 <div class="t"><ui-icon n="up" s="14" style="--sw:1.8;margin-left:-1px"></ui-icon><ui-icon n="cloud" ${ml(17)}></ui-icon><fit-text w="24" ${ml(17,'margin-top:2px')}>ENG</fit-text><ui-icon n="wifi" ${ml(18)}></ui-icon><ui-icon n="sound" ${ml(7)}></ui-icon><ui-icon n="batt" ${ml(8)}></ui-icon><div class="c" ${ml(18)}><fit-text w="29">10.37</fit-text><fit-text w="62">01/05/2024</fit-text></div><ui-icon n="bell" ${ml(7,'color:#b5e8ee')}></ui-icon><ui-icon n="copilot" s="24" box="24" ${ml(16)}></ui-icon></div>`);

/* Text run whose tracking is adjusted so that it occupies exactly w pixels. */
customElements.define('fit-text',class extends HTMLElement{
 connectedCallback(){
  if(this.shadowRoot)return;
  const r=this.attachShadow({mode:'open'}),w=+at(this,'w');
  r.innerHTML='<style>:host{display:block;flex:none;white-space:pre}span{display:inline-block}</style><span><slot></slot></span>';
  const s=r.querySelector('span'),n=this.textContent.length;
  this.style.width='max-content';
  const natural=s.getBoundingClientRect().width;
  s.style.letterSpacing=((w-natural)/n).toFixed(3)+'px';
  this.style.width=w+'px';
 }});
</script>
</body>
</html>
